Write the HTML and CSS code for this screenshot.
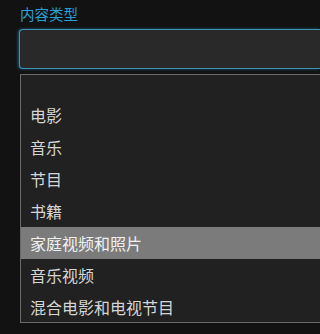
FILE: index.html
```html
<!DOCTYPE html>
<html lang="zh">
<head>
<meta charset="utf-8">
<link rel="stylesheet" href="styles.css">
</head>
<body>
<div class="field">
  <div class="label">内容类型</div>
  <div class="input"></div>
  <ul class="list">
    <li class="empty"></li>
    <li>电影</li>
    <li>音乐</li>
    <li>节目</li>
    <li>书籍</li>
    <li class="selected">家庭视频和照片</li>
    <li>音乐视频</li>
    <li>混合电影和电视节目</li>
  </ul>
</div>
</body>
</html>
```
FILE: styles.css
```css
html, body {
  margin: 0;
  padding: 0;
  background: #121212;
  overflow: hidden;
  font-family: "Noto Sans CJK SC", "Noto Sans", sans-serif;
}
.field {
  display: flex;
  flex-direction: column;
  padding: 4px 0 0 19px;
}
.label {
  color: #2b9fd2;
  font-size: 14.5px;
  line-height: 20px;
  height: 20px;
  padding-left: 1px;
}
.input {
  margin-top: 5px;
  height: 38px;
  border: 1px solid #3f93b6;
  border-right: 0;
  border-radius: 4px 0 0 4px;
  background: #292929;
  box-shadow: -1px 0 3px rgba(40, 150, 210, 0.55);
}
.list {
  list-style: none;
  margin: 5px 0 0 1px;
  padding: 0;
  border: 1px solid #6a6a6a;
  border-right: 0;
  background: #212121;
  height: 247px;
  overflow: hidden;
}
.list li {
  height: 32px;
  line-height: 32px;
  font-size: 16px;
  color: #d6d6d6;
  padding-left: 9px;
  white-space: nowrap;
}
.list li.empty {
  height: 24px;
}
.list li.selected {
  background: #7b7b7b;
  color: #f0f0f0;
}
```
